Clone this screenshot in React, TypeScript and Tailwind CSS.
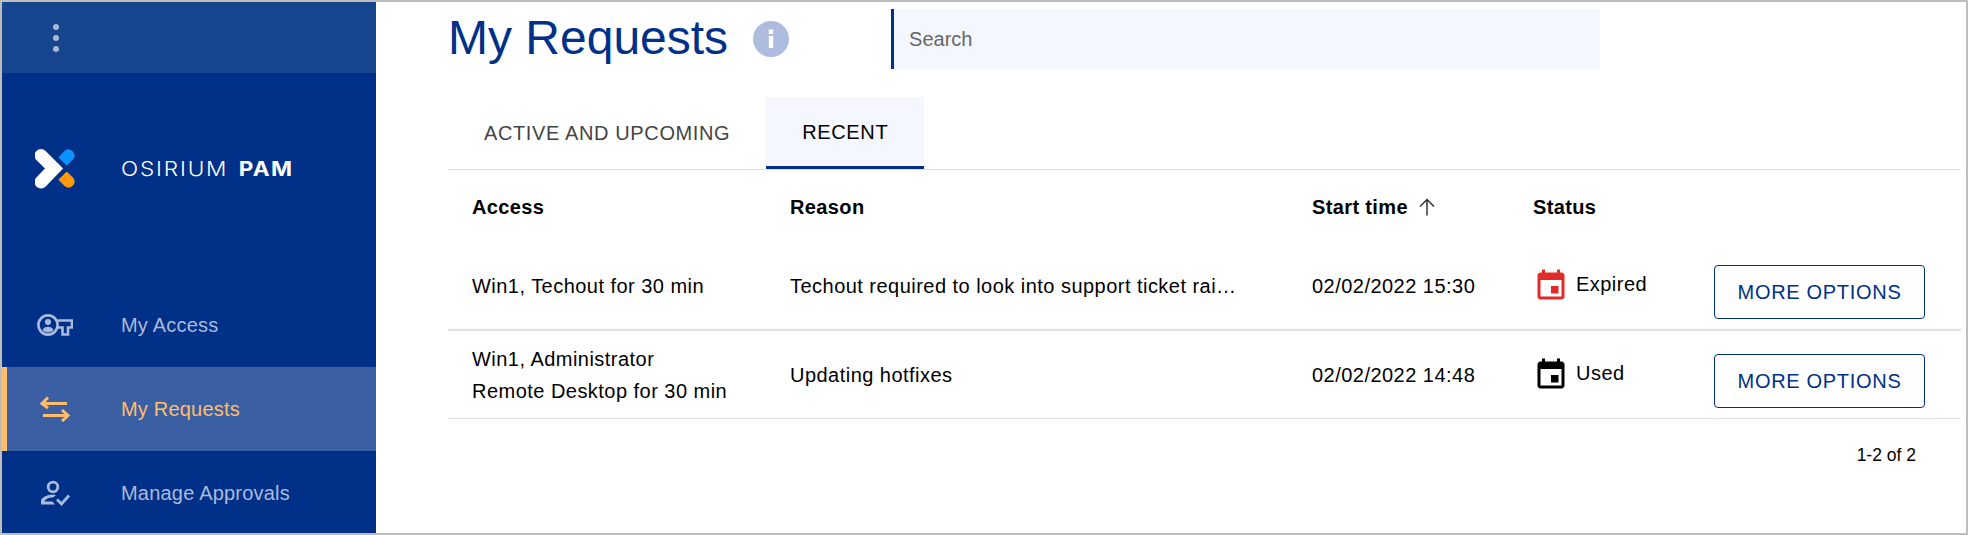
import type { ReactNode } from 'react'

const Logo = () => (
  <svg width="40" height="40" viewBox="0 0 40 40">
    <path d="M6 6.500 L19 19.500 L6 33" fill="none" stroke="#fff" strokeWidth="13" strokeLinecap="round" strokeLinejoin="miter" strokeMiterlimit="4" />
    <path d="M23.400 8.200 L29.800 1.800 A6 6 0 0 1 38.200 10.200 L31.800 16.600 Z" fill="#0a94ff" />
    <path d="M23.400 30.800 L29.800 37.200 A6 6 0 0 0 38.200 28.800 L31.800 22.400 Z" fill="#ff9a0a" />
  </svg>
)

const KeyIcon = () => (
  <svg width="36" height="24" viewBox="0 0 36 24" fill="none" stroke="currentColor" strokeWidth="2.600">
    <circle cx="11" cy="12" r="9.600" />
    <circle cx="11" cy="9" r="3" fill="currentColor" stroke="none" />
    <path d="M5.500 17c1.200-2.500 3-3.300 5.500-3.300s4.300.8 5.500 3.300c-1.400 1.500-3.300 2.400-5.500 2.400s-4.100-.9-5.500-2.400z" fill="currentColor" stroke="none" />
    <path d="M20.500 7.500H35V14.500H31V21.500H25.500V14.500H20.500" />
  </svg>
)

const SwapIcon = () => (
  <svg width="36" height="26" viewBox="0 0 36 26" fill="none" stroke="currentColor" strokeWidth="3">
    <path d="M5 7.500H30" />
    <path d="M11 1.500L5 7.500L11 12" />
    <path d="M6 19.500H31" />
    <path d="M25 14L31 19.500L25 25" />
  </svg>
)

const ApproveIcon = () => (
  <svg width="36" height="26" viewBox="0 0 36 26" fill="none" stroke="currentColor">
    <circle cx="16" cy="7" r="4.800" strokeWidth="2.800" />
    <path d="M4 24.500V21C4 17.500 10 14.500 16 14.500L19 15L16 17.500C12 17.500 8.500 19 7.500 21.500H15.500L18 24.500Z" fill="currentColor" stroke="none" />
    <path d="M20 19.500L24.500 24L32 15.500" strokeWidth="2.800" />
  </svg>
)

const CalendarIcon = ({ className }: { className: string }) => (
  <svg className={className} width="36" height="36" viewBox="0 0 24 24" fill="currentColor">
    <path d="M17 12h-5v5h5v-5zM16 1v2H8V1H6v2H5c-1.110 0-1.990.9-1.990 2L3 19c0 1.100.89 2 2 2h14c1.100 0 2-.9 2-2V5c0-1.100-.9-2-2-2h-1V1h-2zm3 18H5V8h14v11z" />
  </svg>
)

const InfoIcon = () => (
  <svg className="mt-[19px] ml-[25px] shrink-0" width="36" height="36" viewBox="0 0 36 36">
    <circle cx="18" cy="18" r="18" fill="#aebcdf" />
    <rect x="15.800" y="15" width="4.400" height="12" fill="#fff" />
    <rect x="15.800" y="8.500" width="4.400" height="4.400" fill="#fff" />
  </svg>
)

function NavItem({ icon, label, active }: { icon: ReactNode; label: string; active?: boolean }) {
  return (
    <div
      className={
        active
          ? 'flex h-[84px] shrink-0 items-center border-l-[5px] border-[#ffbf6f] bg-[#3a60a3] text-[#ffbd6b]'
          : 'flex h-[84px] shrink-0 items-center border-l-[5px] border-transparent text-[#a9bbdc]'
      }
    >
      <div className="w-[114px] pl-[30px]">{icon}</div>
      <span className="text-[20px] tracking-[0.2px]">{label}</span>
    </div>
  )
}

const rowGrid = 'grid grid-cols-[342px_522px_221px_181px_1fr]'

function MoreButton() {
  return (
    <button className="mt-[13px] h-[54px] w-[211px] rounded-[4px] border border-[#003087] text-[20px] tracking-[0.7px] text-[#003087]">
      MORE OPTIONS
    </button>
  )
}

export default function App() {
  return (
    <div className="flex h-screen overflow-hidden border-2 border-[#bdbdbd] bg-white font-['Liberation_Sans',Arial,sans-serif] text-black">
      <aside className="flex w-[374px] shrink-0 flex-col overflow-hidden bg-[#003087]">
        <div className="flex h-[71px] shrink-0 flex-col justify-center gap-[5px] bg-[#17468f] pl-[51px]">
          <span className="size-[6px] rounded-full bg-[#a9b8d6]" />
          <span className="size-[6px] rounded-full bg-[#a9b8d6]" />
          <span className="size-[6px] rounded-full bg-[#a9b8d6]" />
        </div>
        <div className="h-[210px] shrink-0 pt-[76px] pl-[33px]">
          <div className="flex items-center">
            <Logo />
            <span className="ml-[46px] origin-left scale-x-[1.13] font-['Inter',sans-serif] text-[20px] leading-none font-light tracking-[1.6px] whitespace-nowrap text-white">
              OSIRIUM <span className="ml-[2px] font-bold tracking-[1.2px]">PAM</span>
            </span>
          </div>
        </div>
        <NavItem icon={<KeyIcon />} label="My Access" />
        <NavItem icon={<SwapIcon />} label="My Requests" active />
        <NavItem icon={<ApproveIcon />} label="Manage Approvals" />
      </aside>

      <main className="flex min-w-0 flex-1 flex-col pr-[5px] pl-[72px]">
        <div className="flex h-[95px] shrink-0 items-start">
          <h1 className="mt-[12px] text-[48px] leading-[48px] font-normal whitespace-nowrap text-[#003087]">My Requests</h1>
          <InfoIcon />
          <input
            placeholder="Search"
            className="mt-[7px] ml-[102px] h-[60px] w-[709px] border-l-[3px] border-[#003087] bg-[#f4f7fe] pl-[15px] text-[20px] outline-none placeholder:text-[#666]"
          />
        </div>

        <div className="flex h-[73px] shrink-0 border-b border-[#e0e0e0] tracking-[0.62px]">
          <div className="flex h-[72px] items-center px-9 text-[20px] text-[#444]">ACTIVE AND UPCOMING</div>
          <div className="flex h-[72px] items-center border-b-[3px] border-[#003087] bg-[#f4f7fe] px-9 text-[20px] text-black">RECENT</div>
        </div>

        <div className={`${rowGrid} h-[72px] shrink-0 items-center pt-[2px] text-[20px] font-bold tracking-[0.37px]`}>
          <div className="pl-6">Access</div>
          <div>Reason</div>
          <div className="flex items-center">
            Start time
            <svg className="ml-[7px] text-[#333]" width="24" height="24" viewBox="0 0 24 24" fill="none" stroke="currentColor" strokeWidth="1.500">
              <path d="M12 20.500V4.500M5 11.500L12 4.500L19 11.500" />
            </svg>
          </div>
          <div>Status</div>
          <div />
        </div>

        <div className={`${rowGrid} h-[89px] shrink-0 items-center border-b-2 border-[#e0e0e0] text-[20px] tracking-[0.47px]`}>
          <div className="pl-6">Win1, Techout for 30 min</div>
          <div className="whitespace-nowrap">Techout required to look into support ticket rai…</div>
          <div>02/02/2022 15:30</div>
          <div className="flex items-center gap-[7px]">
            <CalendarIcon className="text-[#e02b2b]" />
            <span className="mb-[4px]">Expired</span>
          </div>
          <MoreButton />
        </div>

        <div className={`${rowGrid} h-[88px] shrink-0 items-center border-b border-[#e0e0e0] text-[20px] tracking-[0.47px]`}>
          <div className="pl-6 leading-8">
            <div>Win1, Administrator</div>
            <div>Remote Desktop for 30 min</div>
          </div>
          <div>Updating hotfixes</div>
          <div>02/02/2022 14:48</div>
          <div className="flex items-center gap-[7px]">
            <CalendarIcon className="text-black" />
            <span className="mb-[4px]">Used</span>
          </div>
          <MoreButton />
        </div>

        <div className="flex h-[73px] shrink-0 items-center justify-end pr-[45px] text-[17.5px]">1-2 of 2</div>
      </main>
    </div>
  )
}
